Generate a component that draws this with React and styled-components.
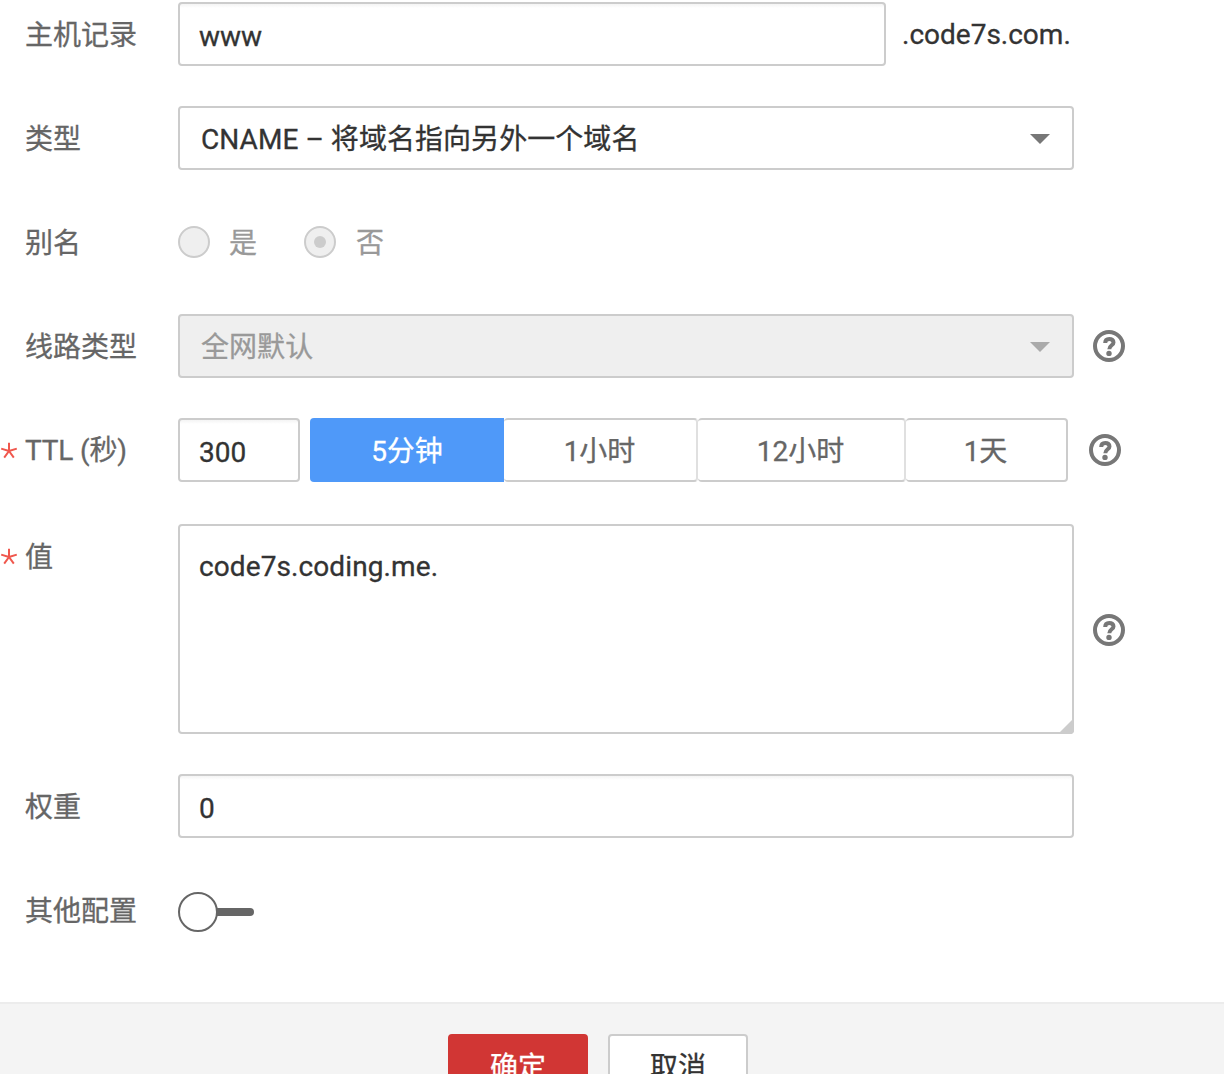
import React from "react";
import styled, { createGlobalStyle } from "styled-components";

const Global = createGlobalStyle`
  * { box-sizing: border-box; }
  html, body { margin: 0; background: #fff; overflow: hidden; }
  body, input, textarea, button {
    font-family: Roboto, "Noto Sans CJK SC", sans-serif;
    font-size: 28px;
    color: #333;
    -webkit-text-stroke: 0.3px currentColor;
  }
`;

const Page = styled.div`
  display: flex;
  flex-direction: column;
  height: 1074px;
  overflow: hidden;
`;

const Form = styled.form`
  display: flex;
  flex-direction: column;
  gap: 40px;
  padding-top: 2px;
  height: 1002px;
  flex: none;
`;

const Row = styled.div`
  display: flex;
  align-items: ${(p) => (p.$top ? "flex-start" : "center")};
  margin-top: ${(p) => (p.$top ? "2px" : "0")};
  min-height: 64px;
`;

const Label = styled.label`
  display: flex;
  flex: none;
  width: 178px;
  height: 64px;
  color: #666;
  white-space: pre;
`;

const LabelText = styled.span`
  line-height: ${(p) => (p.$latin ? 66 : 68)}px;
  height: 64px;
  letter-spacing: ${(p) => (p.$latin ? "-0.15px" : "0")};
`;

const Mark = styled.span`
  flex: none;
  display: flex;
  align-items: center;
  width: 25px;
  padding-top: 2px;
`;

const Controls = styled.div`
  display: flex;
  align-items: center;
`;

const Input = styled.input`
  width: ${(p) => p.$width}px;
  height: 64px;
  padding: 4px 19px 0;
  border: 2px solid #ccc;
  border-radius: 4px;
  background: #fff linear-gradient(#f4f4f4, #fff) no-repeat 0 0 / 100% 4px;
  outline: none;
`;

const Area = styled.textarea`
  display: block;
  width: 896px;
  height: 210px;
  padding: 21px 19px;
  line-height: 40px;
  letter-spacing: 0.1px;
  border: 2px solid #ccc;
  border-radius: 4px;
  resize: none;
  outline: none;
`;

const AreaBox = styled.div`
  position: relative;
`;

const Grip = styled.svg`
  position: absolute;
  right: 0;
  bottom: 0;
`;

const Suffix = styled.span`
  margin-left: 16px;
  line-height: 62px;
  padding-top: 2px;
`;

const Select = styled.div`
  display: flex;
  align-items: center;
  justify-content: space-between;
  width: 896px;
  height: 64px;
  padding: 0 22px 2px 21px;
  border: 2px solid #ccc;
  border-radius: 4px;
  letter-spacing: 0.06px;
  background: ${(p) => (p.$disabled ? "#efefef" : "#fff")};
  color: ${(p) => (p.$disabled ? "#999" : "#333")};
`;

const Caret = styled.span`
  border: 10px solid transparent;
  border-bottom: 0;
  border-top-color: ${(p) => (p.$disabled ? "#aaa" : "#777")};
  margin-top: 4px;
`;

const Option = styled.span`
  display: flex;
  align-items: center;
  width: ${(p) => p.$width}px;
  gap: ${(p) => p.$gap}px;
  color: #999;
`;

const OptionText = styled.span`
  padding-bottom: 2px;
`;

const Radio = styled.span`
  display: grid;
  place-items: center;
  width: 32px;
  height: 32px;
  border: 2px solid #ccc;
  border-radius: 50%;
  background: #efefef;
`;

const Dot = styled.span`
  width: 12px;
  height: 12px;
  border-radius: 50%;
  background: #ccc;
`;

const Segments = styled.div`
  display: flex;
  margin-left: 10px;
`;

const Segment = styled.button`
  width: ${(p) => p.$width}px;
  height: 64px;
  padding: 0 1px 2px 0;
  border: 2px solid #ccc;
  border-right-color: ${(p) => (p.$last ? "#ccc" : "#e0e0e0")};
  border-left-width: 0;
  border-radius: 4px;
  background: #fff;
  color: #666;
  ${(p) =>
    p.$active &&
    `
    padding-right: 0;
    border: 0;
    border-radius: 4px 0 0 4px;
    background: #4f99f9;
    color: #fff;
  `}
`;

const HelpIcon = styled.svg`
  display: block;
  flex: none;
  margin-left: ${(p) => p.$gap}px;
  margin-top: ${(p) => p.$drop}px;
`;

const Switch = styled.span`
  display: flex;
  align-items: center;
  margin-top: 4px;
`;

const Knob = styled.span`
  width: 40px;
  height: 40px;
  border: 2px solid #666;
  border-radius: 50%;
`;

const Track = styled.span`
  width: 37px;
  height: 8px;
  margin-left: -1px;
  border-radius: 0 4px 4px 0;
  background: #666;
`;

const Footer = styled.footer`
  display: flex;
  flex: none;
  justify-content: center;
  align-items: flex-start;
  gap: 20px;
  height: 128px;
  padding: 30px 28px 0 0;
  border-top: 2px solid #ececec;
  background: #f4f4f4;
`;

const Button = styled.button`
  width: 140px;
  height: 64px;
  padding: 0 0 2px;
  border: 2px solid ${(p) => (p.$primary ? "#d13634" : "#ccc")};
  border-radius: 4px;
  background: ${(p) => (p.$primary ? "#d13634" : "#fff")};
  color: ${(p) => (p.$primary ? "#fff" : "#333")};
`;

const Help = ({ gap = 19, drop = 0 }) => (
  <HelpIcon $gap={gap} $drop={drop} width="32" height="32" viewBox="0 0 32 32" fill="none">
    <circle cx="16" cy="16" r="14" stroke="#777" strokeWidth="4" />
    <path
      d="M12.2 13C12.2 10.4 13.9 8.9 16.3 8.9C18.8 8.9 20.5 10.3 20.5 12.5C20.5 15.4 16.3 15.3 16.3 19.2"
      stroke="#777"
      strokeWidth="4"
    />
    <circle cx="16" cy="23.4" r="2.7" fill="#777" />
  </HelpIcon>
);

const Star = () => (
  <svg width="18" height="18" viewBox="0 0 18 18">
    <path
      d="M9 9V.8M9 9L1.2 6.6M9 9L16.8 6.6M9 9L4.2 15.6M9 9L13.8 15.6"
      stroke="#f0574d"
      strokeWidth="2"
    />
  </svg>
);

const Field = ({ label, latin, required, top, children }) => (
  <Row $top={top}>
    <Label>
      <Mark>{required && <Star />}</Mark>
      <LabelText $latin={latin}>{label}</LabelText>
    </Label>
    <Controls>{children}</Controls>
  </Row>
);

const durations = [
  { text: "5分钟", width: 194, active: true },
  { text: "1小时", width: 194 },
  { text: "12小时", width: 208 },
  { text: "1天", width: 162, last: true },
];

export default function App() {
  return (
    <Page>
      <Global />
      <Form>
        <Field label="主机记录">
          <Input $width={708} defaultValue="www" />
          <Suffix>.code7s.com.</Suffix>
        </Field>
        <Field label="类型">
          <Select>
            CNAME – 将域名指向另外一个域名
            <Caret />
          </Select>
        </Field>
        <Field label="别名">
          <Option $width={126} $gap={19}>
            <Radio />
            <OptionText>是</OptionText>
          </Option>
          <Option $width={90} $gap={20}>
            <Radio>
              <Dot />
            </Radio>
            <OptionText>否</OptionText>
          </Option>
        </Field>
        <Field label="线路类型">
          <Select $disabled>
            全网默认
            <Caret $disabled />
          </Select>
          <Help />
        </Field>
        <Field label="TTL (秒)" latin required>
          <Input $width={122} defaultValue="300" />
          <Segments>
            {durations.map((d) => (
              <Segment
                key={d.text}
                type="button"
                $width={d.width}
                $active={d.active}
                $last={d.last}
              >
                {d.text}
              </Segment>
            ))}
          </Segments>
          <Help gap={21} />
        </Field>
        <Field label="值" required top>
          <AreaBox>
            <Area defaultValue="code7s.coding.me." spellCheck={false} />
            <Grip width="16" height="16" viewBox="0 0 16 16">
              <path d="M16 0V12Q16 16 12 16H0Z" fill="#ccc" />
            </Grip>
          </AreaBox>
          <Help drop={2} />
        </Field>
        <Field label="权重">
          <Input $width={896} defaultValue="0" />
        </Field>
        <Field label="其他配置">
          <Switch>
            <Knob />
            <Track />
          </Switch>
        </Field>
      </Form>
      <Footer>
        <Button type="button" $primary>
          确定
        </Button>
        <Button type="button">取消</Button>
      </Footer>
    </Page>
  );
}
